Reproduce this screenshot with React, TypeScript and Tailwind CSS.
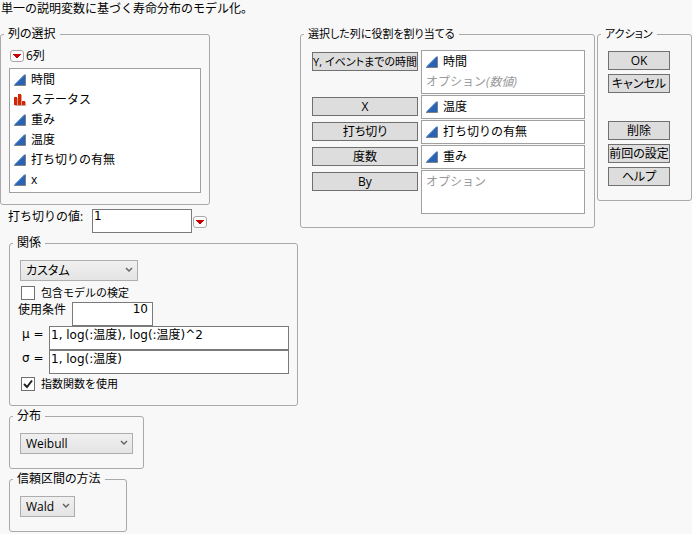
import type { ReactNode } from "react";

function ContinuousIcon() {
  return (
    <svg className="h-3 w-3 shrink-0" viewBox="0 0 12 12" aria-hidden="true">
      <path d="M0.5 11 L11 0.5 V11 Z" fill="#2a62b4" />
      <path d="M0.5 10.5 L10.5 0.5" stroke="#6fa0dc" strokeWidth="1" fill="none" />
      <path d="M0 11.5 H11.5 V0.5" stroke="#7d8085" strokeWidth="1" fill="none" />
    </svg>
  );
}

function NominalIcon() {
  return (
    <svg className="h-3 w-3 shrink-0" viewBox="0 0 12 12" shapeRendering="crispEdges" aria-hidden="true">
      <path d="M1 11 H12 V12 H1 Z M3 4 H4 V11 H3 Z M7 1 H8 V11 H7 Z M11 8 H12 V11 H11 Z" fill="#c9a59d" />
      <path d="M0 3 H3 V11 H0 Z M4 0 H7 V11 H4 Z M8 7 H11 V11 H8 Z" fill="#d92400" />
    </svg>
  );
}

function RedTriangle({ label }: { label: string }) {
  return (
    <button
      type="button"
      aria-label={label}
      className="flex h-3 w-3.5 shrink-0 items-center justify-center rounded-[3px] border border-[#a8a8a8] bg-[#fcfcfc]"
    >
      <svg className="h-1 w-2" viewBox="0 0 8 4" shapeRendering="crispEdges" aria-hidden="true">
        <path d="M0 0 H8 V1 H7 V2 H6 V3 H5 V4 H3 V3 H2 V2 H1 V1 H0 Z" fill="#cc0000" />
      </svg>
    </button>
  );
}

type GroupProps = { title: string; small?: boolean; className: string; bodyClassName: string; children: ReactNode };

function Group({ title, small, className, bodyClassName, children }: GroupProps) {
  return (
    <fieldset className={`min-w-0 rounded-[3px] border border-[#a9a9a9] ${className}`}>
      <legend
        className={`ml-[3px] h-4 px-1 leading-4 whitespace-nowrap [font-feature-settings:'palt'] ${small ? "text-[11px]" : ""}`}
      >
        {title}
      </legend>
      <div className={bodyClassName}>{children}</div>
    </fieldset>
  );
}

function Dropdown({ label, value, className }: { label: string; value: string; className: string }) {
  return (
    <div className={`relative h-[21px] ${className}`}>
      <select
        aria-label={label}
        defaultValue={value}
        className="h-full w-full appearance-none border border-[#adadad] bg-linear-to-b from-[#f0f0f0] to-[#e4e4e4] pl-[5px] leading-4 [font-feature-settings:'palt']"
      >
        <option>{value}</option>
      </select>
      <svg className="pointer-events-none absolute top-[7px] right-[5px] h-1.5 w-2" viewBox="0 0 8 6" aria-hidden="true">
        <path d="M1 1 L4 4 L7 1" stroke="#606060" strokeWidth="1.4" fill="none" />
      </svg>
    </div>
  );
}

function Check({ label, checked }: { label: string; checked: boolean }) {
  return (
    <label className="flex items-center gap-1.5 text-[11px] leading-4">
      <span className="relative h-3.5 w-3.5">
        <input
          type="checkbox"
          defaultChecked={checked}
          className="peer block h-3.5 w-3.5 appearance-none border border-[#707070] bg-white"
        />
        <svg
          className="pointer-events-none absolute inset-0 hidden h-3.5 w-3.5 peer-checked:block"
          viewBox="0 0 14 14"
          aria-hidden="true"
        >
          <path d="M3 7 L6 10 L11 3.5" stroke="#222" strokeWidth="2" fill="none" />
        </svg>
      </span>
      {label}
    </label>
  );
}

const wide = "font-['DejaVu_Sans','Noto_Sans_CJK_JP',sans-serif]";
const textBox = `h-6 border border-[#7a7a7a] bg-white px-px pb-2.5 leading-3 ${wide}`;
const pushButton =
  "h-[19px] border border-[#707070] bg-[#dddddd] text-center leading-4 whitespace-nowrap [font-feature-settings:'palt']";

const columns = [
  { name: "時間", nominal: false },
  { name: "ステータス", nominal: true },
  { name: "重み", nominal: false },
  { name: "温度", nominal: false },
  { name: "打ち切りの有無", nominal: false },
  { name: "x", nominal: false },
];

const roles = [
  { role: "Y, イベントまでの時間", column: "時間", hint: "オプション", hintType: "(数値)", small: true },
  { role: "X", column: "温度" },
  { role: "打ち切り", column: "打ち切りの有無" },
  { role: "度数", column: "重み" },
  { role: "By", hint: "オプション", tall: true },
];

export default function App() {
  return (
    <main className="min-h-screen bg-[#f8f8f8] pb-0.5 font-['Open_Sans','Noto_Sans_CJK_JP',sans-serif] text-xs leading-4 text-black">
      <h1 className="h-[26px] pl-px leading-[18px]">単一の説明変数に基づく寿命分布のモデル化。</h1>
      <div className="flex items-start gap-0.5">
        <div className="w-[298px] shrink-0">
          <Group title="列の選択" className="w-[210px]" bodyClassName="px-2 pt-1.5 pb-[11px]">
            <div className="mb-1 flex h-4 items-center gap-0.5 pl-px">
              <RedTriangle label="列メニュー" />
              <span>6列</span>
            </div>
            <ul className="border border-[#a0a0a0] bg-white pt-px pb-0.5">
              {columns.map((c) => (
                <li key={c.name} className="flex h-5 items-center gap-[5px] pl-1">
                  {c.nominal ? <NominalIcon /> : <ContinuousIcon />}
                  {c.name}
                </li>
              ))}
            </ul>
          </Group>
          <div className="flex items-start pt-1 pl-2">
            <label htmlFor="censor" className="w-[84px] whitespace-nowrap">
              打ち切りの値:
            </label>
            <input id="censor" defaultValue="1" className={`${textBox} w-[100px]`} />
            <span className="mt-[7px] ml-px">
              <RedTriangle label="打ち切りの値メニュー" />
            </span>
          </div>
          <div className="ml-[9px] flex w-[289px] flex-col items-start gap-0.5 pt-0.5">
            <Group title="関係" className="w-full" bodyClassName="pt-[9px] pb-[13px]">
              <Dropdown label="関係" value="カスタム" className="ml-2.5 w-[118px]" />
              <div className="ml-[11px] pt-1 pb-px">
                <Check label="包含モデルの検定" checked={false} />
              </div>
              <div className="flex pl-2">
                <label htmlFor="cond" className="w-[54px] whitespace-nowrap">
                  使用条件
                </label>
                <input id="cond" defaultValue="10" className={`${textBox} w-[81px] pr-1 text-right`} />
              </div>
              <div className="flex pr-2 pl-3">
                <label htmlFor="mu" className={`w-[27px] shrink-0 whitespace-nowrap ${wide}`}>
                  μ =
                </label>
                <input id="mu" defaultValue="1, log(:温度), log(:温度)^2" className={`${textBox} min-w-0 flex-1`} />
              </div>
              <div className="flex pr-2 pl-3">
                <label htmlFor="sigma" className={`w-[27px] shrink-0 whitespace-nowrap ${wide}`}>
                  σ =
                </label>
                <input id="sigma" defaultValue="1, log(:温度)" className={`${textBox} min-w-0 flex-1`} />
              </div>
              <div className="ml-[11px] pt-0.5">
                <Check label="指数関数を使用" checked />
              </div>
            </Group>
            <Group title="分布" className="w-[135px]" bodyClassName="px-2.5 pt-[9px] pb-3.5">
              <Dropdown label="分布" value="Weibull" className="w-full" />
            </Group>
            <Group title="信頼区間の方法" className="w-[118px]" bodyClassName="px-2.5 pt-[9px] pb-3.5">
              <Dropdown label="信頼区間の方法" value="Wald" className="w-[55px]" />
            </Group>
          </div>
        </div>

        <Group
          title="選択した列に役割を割り当てる"
          small
          className="flex-1"
          bodyClassName="pt-2 pr-[9px] pb-[13px] pl-[11px]"
        >
          <div className="grid grid-cols-[106px_minmax(0,1fr)] items-start gap-x-[3px] gap-y-px">
            {roles.map((r) => (
              <div key={r.role} className="contents">
                <button type="button" className={`${pushButton} mt-0.5 ${r.small ? "text-[11px]" : ""}`}>
                  {r.role}
                </button>
                <ul className={`border border-[#a0a0a0] bg-white pt-px pb-px pl-1 ${r.tall ? "h-11" : ""}`}>
                  {r.column && (
                    <li className="flex h-5 items-center gap-[5px]">
                      <ContinuousIcon />
                      {r.column}
                    </li>
                  )}
                  {r.hint && (
                    <li className="h-5 leading-5 text-[#999999]">
                      {r.hint}
                      <i>{r.hintType}</i>
                    </li>
                  )}
                </ul>
              </div>
            ))}
          </div>
        </Group>

        <Group title="アクション" small className="w-[95px] shrink-0" bodyClassName="pt-[9px] pb-3.5 pl-2.5">
          <div className="flex w-[62px] flex-col gap-1">
            <button type="button" className={pushButton}>OK</button>
            <button type="button" className={pushButton}>キャンセル</button>
            <button type="button" className={`${pushButton} mt-6`}>削除</button>
            <button type="button" className={pushButton}>前回の設定</button>
            <button type="button" className={pushButton}>ヘルプ</button>
          </div>
        </Group>
      </div>
    </main>
  );
}
